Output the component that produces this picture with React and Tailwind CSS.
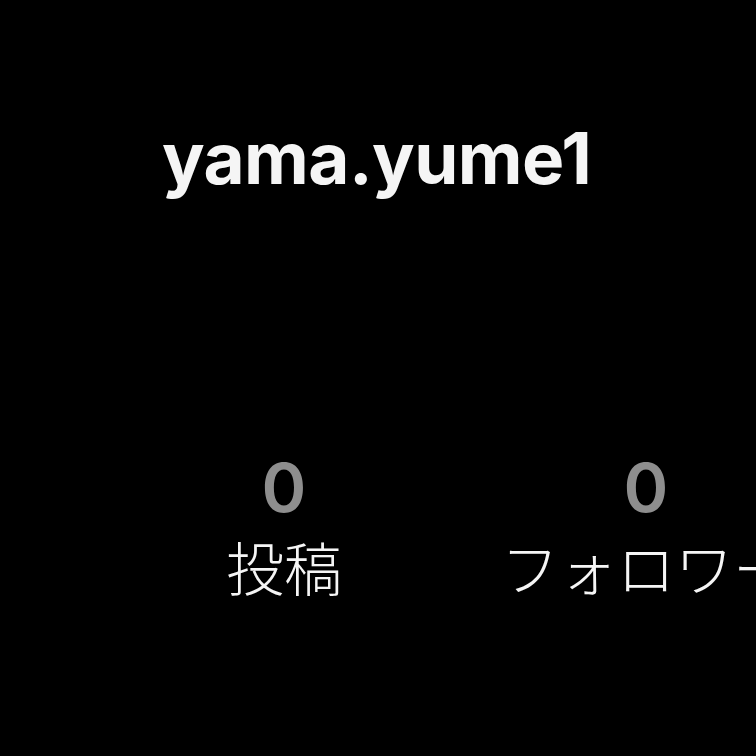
export default function App() {
    const stats = [
        { value: "0", label: "投稿" },
        { value: "0", label: "フォロワー" },
    ];

    return (
        <div
            className="w-[756px] h-[756px] bg-black overflow-hidden"
            style={{ fontFamily: "Inter, 'Noto Sans CJK JP', sans-serif" }}
        >
            <div className="pt-[113px] pl-[162px]">
                <h1 className="text-[71px] leading-[90px] font-bold text-[#f5f5f5] tracking-[-0.6px]">
                    yama.yume1
                </h1>
            </div>
            <div className="flex mt-[249px] pl-[103px]">
                {stats.map((s, i) => (
                    <div key={i} className="w-[362px] shrink-0 flex flex-col items-center">
                        <span className="text-[68px] leading-[70px] font-semibold text-[#8e8e8e]">{s.value}</span>
                        <span className="mt-[14px] text-[58px] leading-[68px] font-light text-[#f5f5f5] whitespace-nowrap">
                            {s.label}
                        </span>
                    </div>
                ))}
            </div>
        </div>
    );
}
